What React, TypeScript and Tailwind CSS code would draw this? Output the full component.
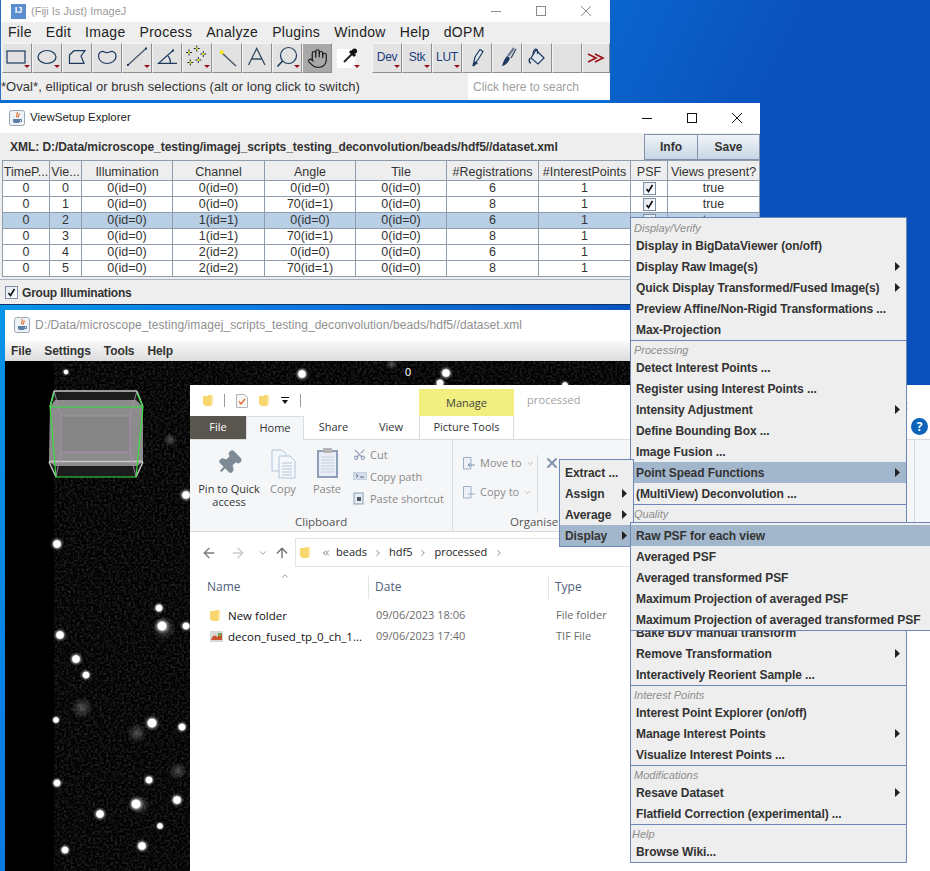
import { ArrowLeft, ArrowRight, ArrowUp, ChevronDown, ChevronRight, ChevronsLeft, ChevronUp, Hand, Pin, Scissors, X } from "lucide-react";
import type { ReactNode } from "react";

const NAVY = "#1c3a5e";

const Tri = () => <polygon points="22,22 28,22 25,25" fill="#9b0f16" stroke="none" />;

const ToolBtn = ({ children, active, w }: { children?: ReactNode; active?: boolean; w?: string }) => (
  <div
    className={`flex h-[30px] shrink-0 items-center justify-center border-r border-b border-t border-l border-t-[#f4f4f4] border-l-[#f4f4f4] border-r-[#8f8f8f] border-b-[#8f8f8f] ${w ?? "w-[30px]"} ${
      active ? "bg-[#a8a8a8]" : "bg-[#e2e2e2]"
    }`}
  >
    {children}
  </div>
);

const Ico = ({ children }: { children: ReactNode }) => (
  <svg width="28" height="28" viewBox="1 1 28 28" fill="none" stroke={NAVY} strokeWidth="1.2">
    {children}
  </svg>
);

const Cross = ({ x, y }: { x: number; y: number }) => (
  <g>
    <path d={`M${x - 3} ${y}H${x + 3}M${x} ${y - 3}V${y + 3}`} stroke="#0d2a4a" strokeWidth="1" />
    <rect x={x - 1} y={y - 1} width="2" height="2" fill="#f5e611" stroke="none" />
  </g>
);

const LabelBtn = ({ text }: { text: string }) => (
  <ToolBtn>
    <div className="relative flex h-full w-full items-center justify-center pb-[2px] text-[12px] tracking-[-0.3px] text-[#1c3a7e]">
      {text}
      <svg className="absolute top-0 left-0" width="28" height="28" viewBox="1 1 28 28">
        <Tri />
      </svg>
    </div>
  </ToolBtn>
);

const TitleControls = ({ color }: { color: string }) => (
  <div className="ml-auto flex items-center" style={{ color }}>
    <svg width="12" height="12" viewBox="0 0 12 12" stroke="currentColor" fill="none"><path d="M1 6.5H11" /></svg>
    <svg className="ml-[33px]" width="12" height="12" viewBox="0 0 12 12" stroke="currentColor" fill="none"><rect x="1.5" y="1.5" width="9" height="9" /></svg>
    <svg className="ml-[33px]" width="12" height="12" viewBox="0 0 12 12" stroke="currentColor" fill="none"><path d="M1 1L11 11M11 1L1 11" /></svg>
  </div>
);

const JavaIcon = () => (
  <svg width="16" height="16" viewBox="0 0 16 16" className="shrink-0">
    <rect x="0.5" y="0.5" width="15" height="15" rx="2" fill="#eef1f5" stroke="#9aa6b4" />
    <path d="M8 2C9.5 4 6.5 5 8 7.5M10 3.5C11 5 8.5 6 9.5 7.5" stroke="#d9662b" strokeWidth="1.1" fill="none" />
    <path d="M4 9H11V11C11 12.5 10 13 8 13H7C5 13 4 12.5 4 11Z" fill="#5a7ea6" />
    <path d="M11 9.5H12.5V11.5H11" stroke="#5a7ea6" fill="none" />
  </svg>
);

function ImageJWindow() {
  return (
    <div className="absolute top-0 left-0 flex h-[103px] w-[610px] flex-col border-b-[3px] border-l border-b-[#0b6fd4] border-l-[#2a6fc0] bg-[#eeeeee]">
      <div className="flex h-[22px] shrink-0 items-center bg-white pr-[18px] pl-[10px]">
        <div className="flex h-[15px] w-[15px] items-center justify-center bg-[#5b8fd0] text-[9px] font-bold text-white">IJ</div>
        <span className="ml-[5px] text-[11px] text-[#9b9b9b]">(Fiji Is Just) ImageJ</span>
        <TitleControls color="#8a8a8a" />
      </div>
      <div className="flex h-[21px] shrink-0 items-center gap-[14px] pl-[7px] text-[14px] tracking-[0.3px] text-[#222]">
        {["File", "Edit", "Image", "Process", "Analyze", "Plugins", "Window", "Help", "dOPM"].map((m) => (
          <span key={m}>{m}</span>
        ))}
      </div>
      <div className="flex h-[30px] shrink-0 pl-[1px]">
        <ToolBtn><Ico><rect x="5" y="8" width="18" height="12" /><Tri /></Ico></ToolBtn>
        <ToolBtn><Ico><ellipse cx="15" cy="14" rx="9" ry="6.5" /><Tri /></Ico></ToolBtn>
        <ToolBtn><Ico><path d="M7.5 12L12 7.7H23L19 13L22 20.3H7.5Z" /></Ico></ToolBtn>
        <ToolBtn><Ico><path d="M6.5 13C6.5 9 10 7.5 12.5 9C14 10 15.5 10 17.5 9C20.5 7.5 24 9 24 13C24 18 19 20.5 15 20.5C11 20.5 6.5 18 6.5 13Z" /></Ico></ToolBtn>
        <ToolBtn><Ico><path d="M6 22L24 5.5" strokeWidth="1.4" stroke="#4a5c70" /><rect x="5" y="21" width="2" height="2" fill={NAVY} stroke="none" /><rect x="23" y="4.5" width="2" height="2" fill={NAVY} stroke="none" /><Tri /></Ico></ToolBtn>
        <ToolBtn><Ico><path d="M21 7.5L6.5 20.3H25" /><path d="M16 13C18 15 18.5 17 18.5 20" /><rect x="20" y="6.5" width="2" height="2" fill={NAVY} stroke="none" /></Ico></ToolBtn>
        <ToolBtn><Ico><Cross x={7} y={9.5} /><Cross x={14.7} y={5.5} /><Cross x={21.3} y={11} /><Cross x={16.3} y={17} /><Cross x={8.3} y={19.5} /><Tri /></Ico></ToolBtn>
        <ToolBtn><Ico><path d="M10 10L24 23" strokeWidth="1.6" stroke="#4a5c70" /><rect x="8" y="7.5" width="3.5" height="3.5" fill="#f5e611" stroke="none" /></Ico></ToolBtn>
        <ToolBtn><Ico><path d="M6.5 22L14.7 5.5L23 22M9.5 16H20" strokeWidth="1.3" stroke="#35495f" /></Ico></ToolBtn>
        <ToolBtn><Ico><circle cx="16.5" cy="12.5" r="8" /><path d="M10.5 18L5.5 23.5" strokeWidth="1.6" /><Tri /></Ico></ToolBtn>
        <ToolBtn active><Hand size={21} strokeWidth={1.3} color="#111" /></ToolBtn>
        <div className="flex h-[30px] w-[30px] shrink-0 items-center justify-center bg-[#eeeeee]">
          <svg width="28" height="28" viewBox="1 1 28 28" fill="none">
            <rect x="5" y="6" width="18" height="19" fill="#ffffff" />
            <path d="M12 19L20 11" stroke="#222" strokeWidth="2" />
            <path d="M18 8L23 13" stroke="#111" strokeWidth="3" />
            <circle cx="22.5" cy="8" r="2.6" fill="#111" />
            <Tri />
          </svg>
        </div>
        <div className="w-[10px] shrink-0" />
        <LabelBtn text="Dev" />
        <LabelBtn text="Stk" />
        <LabelBtn text="LUT" />
        <ToolBtn><Ico><path d="M11 23L13 14L18 6.5L21 8.5L16.5 16Z" fill="#dfe6ee" /><path d="M11 23L13 19L15 20Z" fill={NAVY} /></Ico></ToolBtn>
        <ToolBtn><Ico><path d="M16 13L22 5" stroke="#6a7c92" strokeWidth="2.2" /><path d="M19 15L24 6" stroke="#3a4f68" strokeWidth="1.4" /><path d="M15 13L18 15C17 19 13 23 10 23C11 20 12 16 15 13Z" fill={NAVY} stroke="none" /></Ico></ToolBtn>
        <ToolBtn><Ico><path d="M14 7L22 15L16 21L9 15Z" fill="#dfe6ee" /><path d="M11 12C11 8 13 5 15 6.5C16 7.5 15.5 10 15.5 11" /><path d="M8 15C6.5 18 7.5 20 9 20" strokeWidth="1.6" /></Ico></ToolBtn>
        <ToolBtn />
        <ToolBtn w="w-[28px]">
          <svg width="20" height="12" viewBox="0 0 20 12" fill="none" stroke="#9b0f16" strokeWidth="1.6">
            <path d="M2 2L10 6L2 10M9 2L17 6L9 10" />
          </svg>
        </ToolBtn>
      </div>
      <div className="flex min-h-0 flex-1 items-center">
        <span className="text-[13px] tracking-[0.05px] text-[#333]">*Oval*, elliptical or brush selections (alt or long click to switch)</span>
        <div className="ml-auto flex h-full w-[142px] items-center bg-white pl-[5px] text-[12px] text-[#a0a0a0]">Click here to search</div>
      </div>
    </div>
  );
}

const tableCols = ["w-[47px]", "w-[32px]", "w-[91px]", "w-[92px]", "w-[91px]", "w-[91px]", "w-[92px]", "w-[92px]", "w-[37px]", "w-[92px]"];
const tableHead = ["TimeP...", "Vie...", "Illumination", "Channel", "Angle", "Tile", "#Registrations", "#InterestPoints", "PSF", "Views present?"];
const tableRows = [
  ["0", "0", "0(id=0)", "0(id=0)", "0(id=0)", "0(id=0)", "6", "1"],
  ["0", "1", "0(id=0)", "0(id=0)", "70(id=1)", "0(id=0)", "8", "1"],
  ["0", "2", "0(id=0)", "1(id=1)", "0(id=0)", "0(id=0)", "6", "1"],
  ["0", "3", "0(id=0)", "1(id=1)", "70(id=1)", "0(id=0)", "8", "1"],
  ["0", "4", "0(id=0)", "2(id=2)", "0(id=0)", "0(id=0)", "6", "1"],
  ["0", "5", "0(id=0)", "2(id=2)", "70(id=1)", "0(id=0)", "8", "1"],
];

const Check = () => (
  <div className="flex h-[13px] w-[13px] items-center justify-center border border-[#7c8ea3] bg-[linear-gradient(135deg,#e2e8ef,#ffffff)]">
    <svg width="9" height="9" viewBox="0 0 9 9" fill="none" stroke="#111" strokeWidth="1.6">
      <path d="M1.5 5L3.5 7.5L7.5 1" />
    </svg>
  </div>
);

function ViewSetupWindow() {
  return (
    <div className="absolute top-[103px] left-0 flex h-[202px] w-[760px] flex-col border-b border-[#0c3468] bg-[#eeeeee]">
      <div className="flex h-[30px] shrink-0 items-center bg-white pr-[17px] pl-[9px]">
        <JavaIcon />
        <span className="ml-[5px] text-[11.5px] text-[#222]">ViewSetup Explorer</span>
        <TitleControls color="#111" />
      </div>
      <div className="flex h-[27px] shrink-0 items-center pl-[10px]">
        <span className="text-[12px] font-bold tracking-[-0.055px] text-[#333]">XML: D:/Data/microscope_testing/imagej_scripts_testing_deconvolution/beads/hdf5//dataset.xml</span>
        <div className="ml-auto flex h-[26px]">
          <div className="flex w-[54px] items-center justify-center border border-[#8093aa] bg-[linear-gradient(#f0f4f8,#c8d6e5)] text-[12px] font-bold text-[#333]">Info</div>
          <div className="flex w-[62px] items-center justify-center border border-l-0 border-[#8093aa] bg-[linear-gradient(#f0f4f8,#c8d6e5)] text-[12px] font-bold text-[#333]">Save</div>
        </div>
      </div>
      <div className="pl-[2px]">
        <table className="w-[757px] table-fixed text-center text-[12.5px] text-[#333]">
          <colgroup>
            {tableCols.map((c, i) => (
              <col key={i} className={c} />
            ))}
          </colgroup>
          <thead>
            <tr className="h-[20px] bg-[#eeeeee]">
              {tableHead.map((h) => (
                <th key={h} className="h-[20px] overflow-hidden border border-[#8e9cab] p-0 pt-[2px] text-[12.5px] leading-[14px] font-normal whitespace-nowrap">{h}</th>
              ))}
            </tr>
          </thead>
          <tbody>
            {tableRows.map((r, i) => (
              <tr key={i} className={`h-[16px] leading-[15px] ${i === 2 ? "bg-[#b8cfe6]" : "bg-white"}`}>
                {r.map((v, j) => (
                  <td key={j} className="border border-[#8e9cab] p-0">{v}</td>
                ))}
                {/* rows 3 and down sit under the popup menu */}
                <td className="border border-[#8e9cab] p-0">
                  {i < 3 && <div className="flex justify-center"><Check /></div>}
                </td>
                <td className="border border-[#8e9cab] p-0">{i < 3 ? "true" : ""}</td>
              </tr>
            ))}
          </tbody>
        </table>
      </div>
      <div className="mt-[2px] flex flex-1 items-center gap-[4px] border-t border-[#a8b4c0] pt-[1px] pl-[5px]">
        <Check />
        <span className="text-[12px] font-bold tracking-[-0.2px] text-[#333]">Group Illuminations</span>
      </div>
    </div>
  );
}

const beads: [number, number, number][] = [
  [66, 372, 4], [302, 374, 7], [186, 495, 7], [57, 544, 7], [446, 373, 7], [440, 383, 6], [565, 385, 5],
  [159, 608, 6], [162, 626, 8], [186, 626, 6], [60, 635, 7], [76, 659, 7], [86, 675, 6], [56, 720, 5],
  [152, 723, 8], [182, 727, 6], [149, 780, 6], [57, 783, 6], [136, 804, 8], [177, 800, 7], [100, 814, 7],
  [160, 826, 5], [65, 850, 6], [142, 846, 7],
];
const dimBeads: [number, number, number][] = [
  [137, 733, 10], [82, 708, 11], [178, 771, 9], [170, 440, 7], [140, 805, 10], [392, 364, 6], [164, 628, 12],
];

function BeadCanvas() {
  return (
    <svg width="625" height="510" viewBox="5 361 625 510" className="block">
      <defs>
        <filter id="grain" x="0" y="0" width="100%" height="100%" colorInterpolationFilters="sRGB">
          <feTurbulence type="fractalNoise" baseFrequency="0.45" numOctaves="1" seed="4" />
          <feColorMatrix values="0.36 0 0 0 -0.14 0.36 0 0 0 -0.14 0.36 0 0 0 -0.14 0 0 0 0 1" />
        </filter>
        <filter id="soft" x="-30%" y="-30%" width="160%" height="160%">
          <feGaussianBlur stdDeviation="0.6" />
        </filter>
        <radialGradient id="bead">
          <stop offset="0%" stopColor="#fff" />
          <stop offset="48%" stopColor="#fff" />
          <stop offset="68%" stopColor="#fff" stopOpacity="0.28" />
          <stop offset="100%" stopColor="#fff" stopOpacity="0" />
        </radialGradient>
        <radialGradient id="dim">
          <stop offset="0%" stopColor="#fff" stopOpacity="0.28" />
          <stop offset="100%" stopColor="#fff" stopOpacity="0" />
        </radialGradient>
      </defs>
      <rect x="5" y="361" width="49" height="510" fill="#000" />
      <rect x="54" y="361" width="576" height="510" filter="url(#grain)" />
      {dimBeads.map(([x, y, r], i) => (
        <circle key={i} cx={x} cy={y} r={r} fill="url(#dim)" />
      ))}
      <g filter="url(#soft)">
        {beads.map(([x, y, r], i) => (
          <circle key={i} cx={x} cy={y} r={r} fill="url(#bead)" />
        ))}
      </g>
      {/* bounding box overlay */}
      <path d="M54 391H137L143 407V462L136 477H56L49 462L50 407Z" fill="#1c1c1c" />
      <path d="M55 400H136L143 407V462L137 466H55L49 462L50 407Z" fill="#8c8c8c" />
      <rect x="61" y="416" width="69" height="36" fill="#858585" />
      <path d="M54 391H137M49 461.5H143M143 407L137 391M50 407L54 391M49 462L56 477M143 462L136 477" stroke="#c8c8c8" strokeWidth="1.4" fill="none" />
      <path d="M61 416H130V452H61ZM54 391L61 416M137 391L130 416M56 477L61 452M136 477L130 452" stroke="#a98fae" strokeWidth="0.9" fill="none" />
      <path d="M50 407H143M50 407L56 477H136L143 407M50 407L54 393M143 407L137 393" stroke="#2fe33a" strokeWidth="1.1" fill="none" />
    </svg>
  );
}

function BdvWindow() {
  return (
    <div className="absolute top-[310px] left-[5px] w-[625px]">
      <div className="flex h-[30px] items-center bg-white pl-[9px]">
        <JavaIcon />
        <span className="ml-[5px] text-[12px] tracking-[0.07px] text-[#8f8f8f]">D:/Data/microscope_testing/imagej_scripts_testing_deconvolution/beads/hdf5//dataset.xml</span>
      </div>
      <div className="flex h-[21px] items-center gap-[13px] bg-[linear-gradient(#fafafa,#dcdcdc)] pl-[6px] text-[12px] font-bold tracking-[-0.1px] text-[#333]">
        <span>File</span><span>Settings</span><span>Tools</span><span>Help</span>
      </div>
      <div className="relative">
        <BeadCanvas />
        <span className="absolute top-[3px] left-[400px] text-[11px] text-white">0</span>
      </div>
    </div>
  );
}

const FolderIco = ({ size = 10 }: { size?: number }) => (
  <svg width={size} height={size + 1} viewBox="0 0 10 11" className="shrink-0">
    <path d="M0 1H5V0H8V11H2L0 9Z" fill="#f7d56f" />
    <path d="M8 0H10V9L8 11Z" fill="#fbe49e" />
  </svg>
);

const TinyIco = ({ children, w = 14, h = 14 }: { children: ReactNode; w?: number; h?: number }) => (
  <svg width={w} height={h} viewBox={`0 0 ${w} ${h}`} className="shrink-0" fill="none" stroke="#9cb1c9">
    {children}
  </svg>
);

function ExplorerWindow() {
  return (
    <div className="absolute top-[385px] left-[190px] flex h-[486px] w-[740px] flex-col bg-white font-['Open_Sans',sans-serif] text-[11px] text-[#333]">
      <div className="flex h-[31px] shrink-0 items-center">
        <div className="ml-[13px]"><FolderIco /></div>
        <div className="ml-[11px] h-[13px] w-px bg-[#999]" />
        <svg className="ml-[11px]" width="12" height="14" viewBox="0 0 12 14">
          <path d="M0.5 0.5H8.5L11.5 3.5V13.5H0.5Z" fill="#f8f8f8" stroke="#b5b5b5" />
          <path d="M3 7.5L5 10L9 5" stroke="#e2622a" strokeWidth="1.3" fill="none" />
        </svg>
        <div className="ml-[11px]"><FolderIco /></div>
        <svg className="ml-[12px]" width="8" height="8" viewBox="0 0 8 8"><path d="M0 0H8V1H0ZM1 3H7L4 7Z" fill="#111" /></svg>
        <div className="ml-[11px] h-[13px] w-px bg-[#999]" />
        <div className="ml-[118px] flex h-[27px] w-[95px] items-center justify-center self-end bg-[#f0ef80] pt-[2px] text-[#444]">Manage</div>
        <span className="ml-[13px] tracking-[0.1px] text-[#a3a3a3]">processed</span>
      </div>
      <div className="relative z-10 -mb-px flex h-[24px] shrink-0">
        <div className="flex h-[23px] w-[56px] items-center justify-center bg-[#59554f] text-white">File</div>
        <div className="flex h-[24px] w-[58px] items-center justify-center border-x border-t border-[#dadbdc] bg-[#f5f6f7]">Home</div>
        <div className="flex h-[23px] w-[59px] items-center justify-center">Share</div>
        <div className="flex h-[23px] w-[56px] items-center justify-center">View</div>
        <div className="ml-[0px] flex h-[23px] w-[95px] items-center justify-center border-x border-[#dadbdc]">Picture Tools</div>
      </div>
      <div className="flex h-[93px] shrink-0 border-y border-[#dadbdc] bg-[#f5f6f7]">
        <div className="flex w-[263px] flex-col border-r border-[#dadbdc]">
          <div className="flex h-[75px] pt-[5px] leading-[13px]">
            <div className="ml-[8px] flex w-[62px] flex-col items-center">
              <Pin size={26} className="mt-[5px] mb-[6px] rotate-45" fill="#7e8b96" color="#7e8b96" />
              <span className="text-center whitespace-nowrap">Pin to Quick<br />access</span>
            </div>
            <div className="ml-[5px] flex w-[36px] flex-col items-center text-[#8a8a8a]">
              <svg className="mt-[4px] mb-[3px]" width="25" height="30" viewBox="0 0 25 30" fill="#f4f7fb" stroke="#b3c4da">
                <path d="M1 1H11L15 5V22H1Z" />
                <path d="M8 7H19L24 12V29H8Z" />
                <path d="M11 14H21M11 17H21M11 20H21M11 23H21M11 26H21" stroke="#b8c4d4" />
              </svg>
              <span>Copy</span>
            </div>
            <div className="ml-[4px] flex w-[44px] flex-col items-center text-[#8a8a8a]">
              <svg className="mt-[3px] mb-[4px]" width="21" height="30" viewBox="0 0 21 30">
                <rect x="1" y="3" width="19" height="26" fill="#e9eef6" stroke="#8d9fb8" strokeWidth="2" />
                <rect x="6" y="0" width="9" height="5" fill="#b5b5b5" />
                <path d="M4 9H17M4 12H17M4 15H17M4 18H17M4 21H17M4 24H17" stroke="#c4d0e0" />
              </svg>
              <span>Paste</span>
            </div>
            <div className="ml-[4px] flex flex-col gap-[6px] pt-[1px] text-[#8a8a8a]">
              <div className="flex h-[16px] items-center gap-[4px]"><Scissors size={13} color="#8b9cb2" className="-rotate-90" /><span>Cut</span></div>
              <div className="flex h-[16px] items-center gap-[3px]">
                <TinyIco><rect x="0.5" y="3.5" width="13" height="7" fill="#d5deea" stroke="#c3d0e0" /><path d="M3 5L5 7L3 8M7 8H11" stroke="#667" /></TinyIco>
                <span>Copy path</span>
              </div>
              <div className="flex h-[16px] items-center gap-[5px]">
                <TinyIco w={12}><rect x="1" y="2" width="9" height="11" fill="#e6ecf4" stroke="#8d9fb8" /><rect x="4" y="6" width="4" height="4" fill="#556" stroke="none" /></TinyIco>
                <span>Paste shortcut</span>
              </div>
            </div>
          </div>
          <div className="mt-auto pb-[1px] pl-[105px] text-[11.5px] text-[#555]">Clipboard</div>
        </div>
        <div className="flex flex-1 flex-col">
          <div className="flex h-[75px] pt-[15px] text-[#8a8a8a]">
            <div className="ml-[9px] flex w-[76px] flex-col gap-[13px] border-r border-[#dadbdc]">
              <div className="flex h-[16px] items-center gap-[4px]">
                <TinyIco><path d="M1.5 1.5H9V13H1.5Z" fill="#eef2f7" /><path d="M13 9H6M8 7L6 9L8 11" stroke="#7f93ac" /></TinyIco>
                <span>Move to</span>
                <ChevronDown size={9} color="#aaa" />
              </div>
              <div className="flex h-[16px] items-center gap-[4px]">
                <TinyIco><path d="M1.5 1.5H9V13H1.5Z" fill="#eef2f7" /><path d="M6 9H13" stroke="#9cb1c9" /></TinyIco>
                <span>Copy to</span>
                <ChevronDown size={9} color="#aaa" />
              </div>
            </div>
            <div className="ml-[6px]">
              <X size={16} color="#7f93ac" strokeWidth={3} />
            </div>
          </div>
          <div className="mt-auto pb-[1px] pl-[57px] text-[11.5px] text-[#555]">Organise</div>
          <div className="absolute top-[54px] right-[15px] h-[92px] w-px bg-[#dadbdc]" />
        </div>
      </div>
      <div className="flex h-[35px] shrink-0 items-end">
        <div className="flex h-[29px] items-center">
          <ArrowLeft size={16} color="#7a7a7a" className="ml-[11px]" />
          <ArrowRight size={16} color="#c9c9c9" className="ml-[13px]" />
          <ChevronDown size={10} color="#8a8a8a" className="ml-[12px]" />
          <ArrowUp size={16} color="#6a6a6a" className="ml-[6px]" />
        </div>
        <div className="ml-[5px] flex h-[29px] flex-1 items-center border-y border-l border-[#e4e4e4] pl-[4px] text-[#222]">
          <FolderIco size={10} />
          <ChevronsLeft size={10} color="#555" className="ml-[11px]" />
          <span className="ml-[5px]">beads</span>
          <ChevronRight size={10} color="#777" className="mx-[6px]" />
          <span>hdf5</span>
          <ChevronRight size={10} color="#777" className="mx-[6px]" />
          <span>processed</span>
          <ChevronRight size={10} color="#777" className="ml-[7px]" />
        </div>
      </div>
      <div className="relative flex h-[32px] shrink-0 items-end text-[12px] text-[#4c607a]">
        <ChevronUp size={10} color="#888" className="absolute top-[4px] left-[90px]" />
        <div className="flex h-[24px] w-[179px] items-center border-r border-[#e4e4e4] pl-[17px]">Name</div>
        <div className="flex h-[24px] w-[180px] items-center border-r border-[#e4e4e4] pl-[6px]">Date</div>
        <div className="flex h-[24px] items-center pl-[6px]">Type</div>
      </div>
      <div className="flex flex-col pt-[6px]">
        {[
          { n: "New folder", d: "09/06/2023 18:06", t: "File folder", tif: false },
          { n: "decon_fused_tp_0_ch_1...", d: "09/06/2023 17:40", t: "TIF File", tif: true },
        ].map((f) => (
          <div key={f.n} className="flex h-[21px] items-center">
            <div className="flex w-[179px] items-center pl-[20px] text-[11.5px] text-[#111]">
              {f.tif ? (
                <svg width="13" height="11" viewBox="0 0 13 11" className="mr-[5px] shrink-0">
                  <rect width="13" height="11" fill="#d8d8d8" />
                  <path d="M1 9C3 3 6 4 7 6L12 2V9Z" fill="#c8552d" />
                  <rect x="8" y="2" width="3" height="3" fill="#6aa84f" />
                </svg>
              ) : (
                <span className="mr-[8px]"><FolderIco /></span>
              )}
              <span className="whitespace-nowrap">{f.n}</span>
            </div>
            <div className="w-[180px] pl-[7px] text-[#6b6b6b]">{f.d}</div>
            <div className="pl-[7px] text-[#6b6b6b]">{f.t}</div>
          </div>
        ))}
      </div>
      <div className="absolute top-[15px] right-[18px] text-[#aaa]">
        <ChevronUp size={12} className="-rotate-90" />
      </div>
      <div className="absolute top-[33px] right-[2px] flex h-[17px] w-[17px] items-center justify-center rounded-full bg-[#0b63ba] text-[12px] font-bold text-white">?</div>
    </div>
  );
}

const Arrow = () => (
  <svg width="5" height="9" viewBox="0 0 5 9" className="shrink-0"><path d="M0 0L5 4.5L0 9Z" fill="#222" /></svg>
);

const Item = ({ label, arrow, active }: { label: string; arrow?: boolean; active?: boolean }) => (
  <div className={`flex h-[21px] items-center justify-between pr-[6px] pl-[5px] text-[12px] font-bold tracking-[-0.08px] whitespace-nowrap text-[#333] ${active ? "bg-[#a3b7cc]" : ""}`}>
    <span>{label}</span>
    {arrow && <Arrow />}
  </div>
);

const Section = ({ title, first, tight, children }: { title: string; first?: boolean; tight?: boolean; children: ReactNode }) => (
  <div className={first ? "" : "border-t border-[#6d87b9]"}>
    <div className={`${first ? "h-[17px] pt-[3px]" : "h-[16px] pt-[3px]"} flex items-center text-[11px] text-[#8d8d8d] italic ${tight ? "pl-[1px]" : "pl-[3px]"}`}>{title}</div>
    {children}
  </div>
);

function PopupMenus() {
  return (
    <>
      <div className="absolute top-[217px] left-[630px] z-20 w-[277px] border border-[#6d87b9] bg-[#eeeeee]">
        <Section title="Display/Verify" first>
          <Item label="Display in BigDataViewer (on/off)" />
          <Item label="Display Raw Image(s)" arrow />
          <Item label="Quick Display Transformed/Fused Image(s)" arrow />
          <Item label="Preview Affine/Non-Rigid Transformations ..." />
          <Item label="Max-Projection" />
        </Section>
        <Section title="Processing">
          <Item label="Detect Interest Points ..." />
          <Item label="Register using Interest Points ..." />
          <Item label="Intensity Adjustment" arrow />
          <Item label="Define Bounding Box ..." />
          <Item label="Image Fusion ..." />
          <Item label="Point Spead Functions" arrow active />
          <Item label="(MultiView) Deconvolution ..." />
        </Section>
        <Section title="Quality">
          <div className="h-[101px]" />
          <Item label="Bake BDV manual transform" />
          <Item label="Remove Transformation" arrow />
          <Item label="Interactively Reorient Sample ..." />
        </Section>
        <Section title="Interest Points">
          <Item label="Interest Point Explorer (on/off)" />
          <Item label="Manage Interest Points" arrow />
          <Item label="Visualize Interest Points ..." />
        </Section>
        <Section title="Modifications">
          <Item label="Resave Dataset" arrow />
          <Item label="Flatfield Correction (experimental) ..." />
        </Section>
        <Section title="Help" tight>
          <Item label="Browse Wiki..." />
        </Section>
      </div>
      <div className="absolute top-[459px] left-[559px] z-30 w-[75px] border border-[#6d87b9] bg-[#eeeeee] pt-[2px]">
        <Item label="Extract ..." />
        <Item label="Assign" arrow />
        <Item label="Average" arrow />
        <Item label="Display" arrow active />
      </div>
      <div className="absolute top-[522px] left-[630px] z-40 w-[302px] border border-[#6d87b9] bg-[#eeeeee] pt-[2px]">
        <Item label="Raw PSF for each view" active />
        <Item label="Averaged PSF" />
        <Item label="Averaged transformed PSF" />
        <Item label="Maximum Projection of averaged PSF" />
        <Item label="Maximum Projection of averaged transformed PSF" />
      </div>
    </>
  );
}

export default function App() {
  return (
    <div className="relative h-[871px] w-[930px] overflow-hidden bg-[linear-gradient(115deg,#00a2f0_0%,#0b7be0_30%,#0a4fbb_62%,#0a4fbb_100%)] font-['Liberation_Sans',sans-serif]">
      <ImageJWindow />
      <ViewSetupWindow />
      <BdvWindow />
      <ExplorerWindow />
      <PopupMenus />
    </div>
  );
}
